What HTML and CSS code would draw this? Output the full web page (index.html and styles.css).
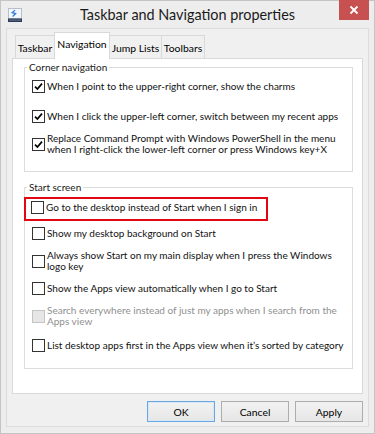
FILE: index.html
```html
<!DOCTYPE html>
<html>
<head>
<meta charset="utf-8">
<title>Taskbar and Navigation properties</title>
<link rel="stylesheet" href="styles.css">
</head>
<body>
<div class="window">
  <div class="titlebar">
    <svg class="app-icon" width="14" height="14" viewBox="0 0 14 14">
      <rect x="0.5" y="0.5" width="13" height="10" fill="#f3f6fa" stroke="#b6bfcb"/>
      <path d="M7 2.2 L4.2 4.6 L7.6 5.6 L4.6 8.4" fill="none" stroke="#2f7ad6" stroke-width="1.3"/>
      <rect x="0" y="10.5" width="14" height="3.5" fill="#2d3b55"/>
      <rect x="1" y="11.5" width="12" height="1.2" fill="#5c6e8e"/>
    </svg>
    <div class="title">Taskbar and Navigation properties</div>
    <div class="close">
      <svg width="10" height="10" viewBox="0 0 10 10"><path d="M1.5 1.5 L8.5 8.5 M8.5 1.5 L1.5 8.5" stroke="#fff" stroke-width="1.8"/></svg>
    </div>
  </div>
  <div class="client">
    <div class="tabs">
      <div class="tab tab-taskbar">Taskbar</div>
      <div class="tab tab-nav selected">Navigation</div>
      <div class="tab tab-jump">Jump Lists</div>
      <div class="tab tab-tool">Toolbars</div>
    </div>
    <div class="panel">
      <div class="group group-corner">
        <div class="legend">Corner navigation</div>
        <div class="row first">
          <span class="box checked"><svg width="11" height="11" viewBox="0 0 11 11"><path d="M2 5.6 L4.4 8 L9 2.6" fill="none" stroke="#000" stroke-width="1.7"/></svg></span>
          <span class="label">When I point to the upper-right corner, show the charms</span>
        </div>
        <div class="row wide">
          <span class="box checked"><svg width="11" height="11" viewBox="0 0 11 11"><path d="M2 5.6 L4.4 8 L9 2.6" fill="none" stroke="#000" stroke-width="1.7"/></svg></span>
          <span class="label">When I click the upper-left corner, switch between my recent apps</span>
        </div>
        <div class="row">
          <span class="box checked"><svg width="11" height="11" viewBox="0 0 11 11"><path d="M2 5.6 L4.4 8 L9 2.6" fill="none" stroke="#000" stroke-width="1.7"/></svg></span>
          <span class="label">Replace Command Prompt with Windows PowerShell in the menu<br>when I right-click the lower-left corner or press Windows key+X</span>
        </div>
      </div>
      <div class="group group-start">
        <div class="legend">Start screen</div>
        <div class="highlight">
          <div class="row">
            <span class="box"></span>
            <span class="label">Go to the desktop instead of Start when I sign in</span>
          </div>
        </div>
        <div class="row">
          <span class="box"></span>
          <span class="label">Show my desktop background on Start</span>
        </div>
        <div class="row">
          <span class="box"></span>
          <span class="label">Always show Start on my main display when I press the Windows<br>logo key</span>
        </div>
        <div class="row">
          <span class="box"></span>
          <span class="label">Show the Apps view automatically when I go to Start</span>
        </div>
        <div class="row disabled">
          <span class="box"></span>
          <span class="label">Search everywhere instead of just my apps when I search from the<br>Apps view</span>
        </div>
        <div class="row last">
          <span class="box"></span>
          <span class="label">List desktop apps first in the Apps view when it’s sorted by category</span>
        </div>
      </div>
    </div>
    <div class="buttons">
      <div class="btn default">OK</div>
      <div class="btn">Cancel</div>
      <div class="btn">Apply</div>
    </div>
  </div>
</div>
</body>
</html>
```
FILE: styles.css
```css
* { box-sizing: border-box; }
html, body { margin: 0; padding: 0; background: #ededed; }
body {
  font-family: Lato, "Liberation Sans", sans-serif;
  font-size: 10px;
  color: #000;
}
.window {
  width: 375px;
  height: 434px;
  border: 1px solid #c4c4c4;
  background: #ededed;
  padding: 0 5px 6px 5px;
  display: flex;
  flex-direction: column;
}
.titlebar {
  height: 27px;
  display: grid;
  grid-template-columns: 1fr auto 1fr;
  align-items: center;
  margin: 0 -5px 0 -5px;
}
.app-icon { margin-left: 7px; }
.title {
  font-size: 14.4px;
  color: #1a1a1a;
  white-space: nowrap;
}
.close {
  justify-self: end;
  align-self: start;
  width: 30px;
  height: 20px;
  margin-top: -1px;
  margin-right: 5px;
  background: #c75050;
  display: flex;
  align-items: center;
  justify-content: center;
}
.client {
  flex: 1;
  background: #f0f0f0;
  border: 1px solid #dcdcdc;
  padding: 3px 5px 4px 5px;
  display: flex;
  flex-direction: column;
}
.tabs {
  display: flex;
  align-items: flex-end;
  height: 26px;
  padding-left: 3px;
  position: relative;
  z-index: 1;
}
.tab {
  height: 23px;
  border: 1px solid #d9d9d9;
  border-bottom: none;
  background: #f0f0f0;
  display: flex;
  align-items: center;
  justify-content: center;
  padding-top: 1px;
  white-space: nowrap;
  font-size: 10.4px;
}
.tab + .tab { margin-left: -1px; }
.tab-taskbar { width: 40px; }
.tab-nav { width: 56px; }
.tab-jump { width: 53px; }
.tab-tool { width: 44px; }
.tab.selected {
  height: 27px;
  margin-bottom: -1px;
  background: #fff;
  padding-top: 0;
  padding-bottom: 4px;
}
.panel {
  height: 336px;
  background: #fff;
  border: 1px solid #d9d9d9;
  padding: 8px 9px 0 11px;
}
.group {
  border: 1px solid #dcdcdc;
  padding: 0 8px 0 7px;
  display: flex;
  flex-direction: column;
}
.group-corner { padding-bottom: 16px; }
.group-start { margin-top: 15px; padding-bottom: 16px; }
.legend {
  align-self: flex-start;
  background: #fff;
  line-height: 12px;
  height: 12px;
  margin: -7px 0 0 -5px;
  padding: 0 2px;
  color: #1a1a1a;
}
.row {
  display: flex;
  align-items: center;
  margin-top: 10px;
}
.group-corner .row.first { margin-top: 7px; }
.group-corner .row.wide { margin-top: 17px; }
.row .label {
  line-height: 11px;
  margin-left: 2px;
  white-space: nowrap;
  color: #111;
}
.box {
  flex: none;
  width: 13px;
  height: 13px;
  border: 1px solid #333;
  background: #fff;
  display: flex;
  align-items: center;
  justify-content: center;
}
.row.disabled .box { background: #e6e6e6; border-color: #c4c4c4; }
.row.disabled .label { color: #8f8f8f; }
.highlight {
  width: 244px;
  border: 2px solid #e30613;
  margin: 4px 0 -6px -8px;
  padding: 0 0 5px 5px;
}
.highlight .row { margin-top: 2px; }
.group-start .highlight + .row { margin-top: 12px; }
.group-start .row.last { margin-top: 12px; }
.buttons {
  display: flex;
  justify-content: flex-end;
  gap: 6px;
  margin-top: 7px;
}
.btn {
  width: 68px;
  height: 21px;
  border: 1px solid #adadad;
  background: linear-gradient(#f2f2f2, #e6e6e6);
  display: flex;
  align-items: center;
  justify-content: center;
  color: #000;
  font-size: 10.4px;
}
.btn.default {
  border-color: #6aa6e0;
  box-shadow: inset 0 0 0 1px #d6e8f8;
}
```
